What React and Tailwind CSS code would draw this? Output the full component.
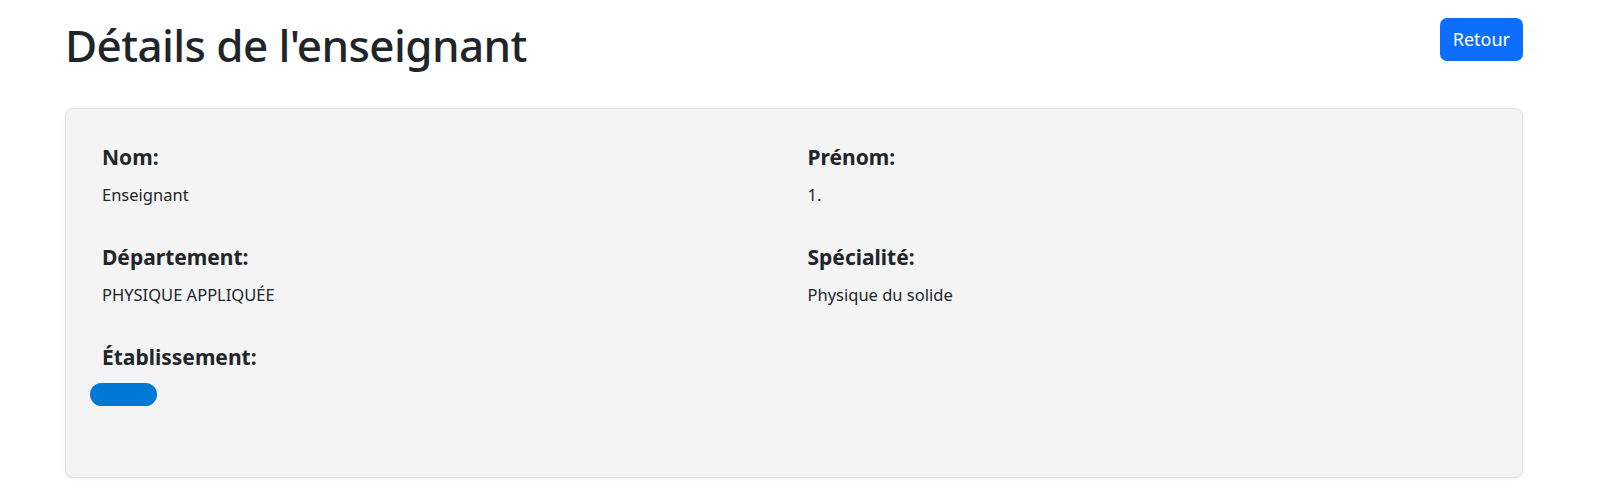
export default function App() {
  const fields = [
    { label: "Nom:", value: "Enseignant" },
    { label: "Prénom:", value: "1." },
    { label: "Département:", value: "PHYSIQUE APPLIQUÉE" },
    { label: "Spécialité:", value: "Physique du solide" },
  ];

  return (
    <div className="min-h-screen bg-white font-['Noto_Sans',sans-serif] text-[#212529]">
      <div className="ml-[65px] w-[1458px] pt-[18px]">
        {/* Header */}
        <div className="flex items-start justify-between mb-[36px]">
          <h1 className="text-[44px] leading-[54px] font-medium tracking-[-0.6px]">Détails de l'enseignant</h1>
          <button className="h-[43px] px-[13px] rounded-[7px] bg-[#0d6efd] text-white text-[18px] leading-[27px]">
            Retour
          </button>
        </div>

        {/* Card */}
        <div className="rounded-[8px] border border-[#dfe1e5] bg-[#f4f4f4] shadow-[0_1px_3px_rgba(0,0,0,0.06)] px-[36px] pt-[35px] pb-[71px]">
          <div className="grid grid-cols-2 gap-x-[27px]">
            {fields.map((f) => (
              <div key={f.label} className="h-[100px]">
                <h5 className="text-[21px] leading-[27px] font-bold">{f.label}</h5>
                <p className="mt-[10px] text-[16.5px] leading-[27px]">{f.value}</p>
              </div>
            ))}
            <div>
              <h5 className="text-[21px] leading-[27px] font-bold">Établissement:</h5>
              <div className="mt-[12px] -ml-[12px] w-[67px] h-[23px] rounded-full bg-[#0078d4]" />
            </div>
          </div>
        </div>
      </div>
    </div>
  );
}
